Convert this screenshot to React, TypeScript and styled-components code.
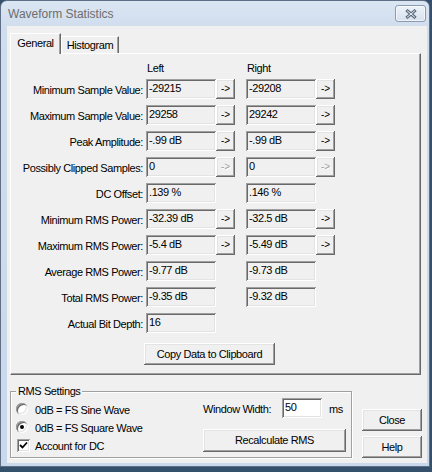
import React from 'react';
import styled, { createGlobalStyle } from 'styled-components';

const UI_FONT = `"Liberation Sans", Arial, sans-serif`;

const GlobalStyle = createGlobalStyle`
  html, body {
    margin: 0;
    padding: 0;
    background: #34506b;
  }
  body {
    font-family: ${UI_FONT};
    font-size: 11px;
    letter-spacing: -0.4px;
    color: #000;
  }
  * {
    box-sizing: border-box;
  }
`;

type Arrow = 'on' | 'off' | undefined;

interface StatRow {
  label: string;
  left: string;
  right?: string;
  arrow?: Arrow;
}

const rows: StatRow[] = [
  { label: 'Minimum Sample Value:', left: '-29215', right: '-29208', arrow: 'on' },
  { label: 'Maximum Sample Value:', left: '29258', right: '29242', arrow: 'on' },
  { label: 'Peak Amplitude:', left: '-.99 dB', right: '-.99 dB', arrow: 'on' },
  { label: 'Possibly Clipped Samples:', left: '0', right: '0', arrow: 'off' },
  { label: 'DC Offset:', left: '.139 %', right: '.146 %' },
  { label: 'Minimum RMS Power:', left: '-32.39 dB', right: '-32.5 dB', arrow: 'on' },
  { label: 'Maximum RMS Power:', left: '-5.4 dB', right: '-5.49 dB', arrow: 'on' },
  { label: 'Average RMS Power:', left: '-9.77 dB', right: '-9.73 dB' },
  { label: 'Total RMS Power:', left: '-9.35 dB', right: '-9.32 dB' },
  { label: 'Actual Bit Depth:', left: '16' },
];

const App = () => {
  return (
    <>
      <GlobalStyle />
      <Window>
        <TitleBar>
          <Title>Waveform Statistics</Title>
          <CloseBox>
            <svg width="12" height="10" viewBox="0 0 12 10">
              <path d="M2.5 2 L9.5 8 M9.5 2 L2.5 8" stroke="#5b6a7e" strokeWidth="3" strokeLinecap="square" />
              <path d="M2.5 2 L9.5 8 M9.5 2 L2.5 8" stroke="#f2f5f9" strokeWidth="1" strokeLinecap="square" />
            </svg>
          </CloseBox>
        </TitleBar>

        <Client>
          <TabStrip>
            <Tab $active $width={51}>General</Tab>
            <Tab $width={58}>Histogram</Tab>
          </TabStrip>

          <TabPage>
            <StatsGrid>
              <ColumnHead $col={2}>Left</ColumnHead>
              <ColumnHead $col={5}>Right</ColumnHead>

              {rows.map((row) => (
                <React.Fragment key={row.label}>
                  <RowLabel>{row.label}</RowLabel>
                  <Field $col={2}>{row.left}</Field>
                  {row.arrow && <ArrowButton $col={3} $disabled={row.arrow === 'off'}>-&gt;</ArrowButton>}
                  {row.right !== undefined && <Field $col={5}>{row.right}</Field>}
                  {row.right !== undefined && row.arrow && (
                    <ArrowButton $col={6} $disabled={row.arrow === 'off'}>-&gt;</ArrowButton>
                  )}
                </React.Fragment>
              ))}

              <CopyButton>Copy Data to Clipboard</CopyButton>
            </StatsGrid>
          </TabPage>

          <BottomRow>
            <GroupBox>
              <Caption>RMS Settings</Caption>
              <GroupInner>
                <OptionList>
                  <Option>
                    <Radio />
                    <OptionText>0dB = FS Sine Wave</OptionText>
                  </Option>
                  <Option>
                    <Radio $checked />
                    <OptionText>0dB = FS Square Wave</OptionText>
                  </Option>
                  <Option>
                    <CheckBox>
                      <svg width="9" height="9" viewBox="0 0 9 9">
                        <polyline points="1,4 3.5,6.5 8,1.5" fill="none" stroke="#000" strokeWidth="1.8" />
                      </svg>
                    </CheckBox>
                    <CheckText>Account for DC</CheckText>
                  </Option>
                </OptionList>

                <WindowControls>
                  <WidthRow>
                    <WidthLabel>Window Width:</WidthLabel>
                    <WidthInput>50</WidthInput>
                    <Unit>ms</Unit>
                  </WidthRow>
                  <RecalcButton>Recalculate RMS</RecalcButton>
                </WindowControls>
              </GroupInner>
            </GroupBox>

            <DialogButtons>
              <PushButton>Close</PushButton>
              <PushButton>Help</PushButton>
            </DialogButtons>
          </BottomRow>
        </Client>
      </Window>
    </>
  );
};

const raised = `
  background: #f0f0f0;
  box-shadow:
    inset -1px -1px 0 #696969,
    inset 1px 1px 0 #ffffff,
    inset -2px -2px 0 #a0a0a0,
    inset 2px 2px 0 #e3e3e3;
`;

const sunken = `
  box-shadow:
    inset 1px 1px 0 #a0a0a0,
    inset -1px -1px 0 #ffffff,
    inset 2px 2px 0 #696969,
    inset -2px -2px 0 #e3e3e3;
`;

const Window = styled.div`
  width: 430px;
  height: 467px;
  display: flex;
  flex-direction: column;
  border: 1px solid #5f7086;
  border-radius: 7px 7px 0 0;
  background: linear-gradient(to bottom, #dbe6f3 0px, #d0ddee 26px, #c9d8ea 100%);
`;

const TitleBar = styled.div`
  height: 25px;
  display: flex;
  align-items: center;
  justify-content: space-between;
  padding: 0 3px 0 7px;
`;

const Title = styled.div`
  font-family: "Liberation Sans", Arial, sans-serif;
  font-size: 12px;
  letter-spacing: 0;
  color: #6d6d6d;
`;

const CloseBox = styled.div`
  width: 31px;
  height: 17px;
  display: flex;
  align-items: center;
  justify-content: center;
  border: 1px solid #8b9bb0;
  border-radius: 3px;
  background: linear-gradient(to bottom, #eef3f9, #d6e1ee);
  box-shadow: inset 0 0 0 1px rgba(255, 255, 255, 0.6);
`;

const Client = styled.div`
  flex: 1;
  display: flex;
  flex-direction: column;
  margin: 0 2px 3px 6px;
  padding: 7px 6px 5px 3px;
  background: #f0f0f0;
`;

const TabStrip = styled.div`
  display: flex;
  align-items: flex-end;
  height: 20px;
  position: relative;
  z-index: 1;
`;

const Tab = styled.div<{ $active?: boolean; $width: number }>`
  width: ${(p) => p.$width}px;
  height: ${(p) => (p.$active ? 21 : 17)}px;
  margin-bottom: ${(p) => (p.$active ? -1 : 0)}px;
  display: flex;
  justify-content: center;
  padding-top: ${(p) => (p.$active ? 3 : 2)}px;
  background: #f0f0f0;
  border-top: 1px solid #ffffff;
  border-left: 1px solid #ffffff;
  border-right: 1px solid #696969;
  box-shadow: inset -1px 0 0 #a0a0a0;
  line-height: 13px;
`;

const TabPage = styled.div`
  height: 322px;
  padding-top: 8px;
  border-top: 1px solid #ffffff;
  border-left: 1px solid #ffffff;
  border-right: 1px solid #696969;
  border-bottom: 1px solid #696969;
  box-shadow: inset -1px -1px 0 #a0a0a0;
`;

const StatsGrid = styled.div`
  display: grid;
  grid-template-columns: 135px 70px 19px 11px 70px 19px;
  grid-template-rows: 11px;
  grid-auto-rows: 20px;
  row-gap: 6px;
`;

const ColumnHead = styled.div<{ $col: number }>`
  grid-column: ${(p) => p.$col} / span 2;
  padding-left: 1px;
  line-height: 14px;
  margin-top: -1px;
`;

const RowLabel = styled.div`
  grid-column: 1;
  text-align: right;
  padding-right: 3px;
  line-height: 22px;
  white-space: nowrap;
`;

const Field = styled.div<{ $col: number }>`
  grid-column: ${(p) => p.$col};
  height: 20px;
  padding: 0 3px;
  line-height: 18px;
  white-space: nowrap;
  background: #f0f0f0;
  ${sunken}
`;

const ArrowButton = styled.div<{ $col: number; $disabled?: boolean }>`
  grid-column: ${(p) => p.$col};
  height: 20px;
  display: flex;
  align-items: center;
  justify-content: center;
  padding-bottom: 1px;
  font-size: 10px;
  letter-spacing: 0;
  color: ${(p) => (p.$disabled ? '#a0a0a0' : '#000')};
  text-shadow: ${(p) => (p.$disabled ? '1px 1px 0 #fff' : 'none')};
  ${raised}
`;

const PushButton = styled.div`
  width: 60px;
  height: 22px;
  display: flex;
  align-items: center;
  justify-content: center;
  padding-bottom: 1px;
  white-space: nowrap;
  ${raised}
`;

const CopyButton = styled(PushButton)`
  grid-column: 2 / span 5;
  justify-self: start;
  width: 131px;
  margin: 4px 0 0 -2px;
`;

const BottomRow = styled.div`
  display: flex;
  gap: 10px;
  margin-top: 16px;
`;

const GroupBox = styled.div`
  position: relative;
  width: 342px;
  height: 67px;
  border: 1px solid #a0a0a0;
  box-shadow: inset 1px 1px 0 #ffffff, 1px 1px 0 #ffffff;
`;

const Caption = styled.div`
  position: absolute;
  top: -8px;
  left: 5px;
  padding: 0 2px;
  line-height: 14px;
  background: #f0f0f0;
`;

const GroupInner = styled.div`
  display: flex;
  justify-content: space-between;
  height: 100%;
`;

const OptionList = styled.div`
  display: flex;
  flex-direction: column;
  padding: 8px 0 0 5px;
`;

const Option = styled.div`
  height: 18px;
  display: flex;
  align-items: center;
  white-space: nowrap;
`;

const Radio = styled.span<{ $checked?: boolean }>`
  position: relative;
  flex: none;
  width: 12px;
  height: 12px;
  border-radius: 50%;
  background: #ffffff;
  box-shadow:
    inset 1px 1px 0 #a0a0a0,
    inset -1px -1px 0 #ffffff,
    inset 2px 2px 0 #696969,
    inset -2px -2px 0 #e3e3e3;

  &::after {
    content: '';
    display: ${(p) => (p.$checked ? 'block' : 'none')};
    position: absolute;
    left: 4px;
    top: 4px;
    width: 4px;
    height: 4px;
    border-radius: 50%;
    background: #000;
  }
`;

const OptionText = styled.span`
  margin-left: 7px;
  padding-top: 1px;
`;

const CheckBox = styled.span`
  flex: none;
  width: 13px;
  height: 13px;
  margin-left: 1px;
  display: flex;
  align-items: center;
  justify-content: center;
  background: #ffffff;
  ${sunken}
`;

const CheckText = styled.span`
  margin-left: 5px;
  padding-top: 1px;
`;

const WindowControls = styled.div`
  width: 143px;
  margin-right: 5px;
  padding-top: 6px;
  display: flex;
  flex-direction: column;
  gap: 11px;
`;

const WidthRow = styled.div`
  height: 20px;
  display: flex;
  align-items: center;
  white-space: nowrap;
`;

const WidthLabel = styled.span`
  width: 79px;
  padding-top: 2px;
`;

const WidthInput = styled.div`
  width: 40px;
  height: 20px;
  padding: 0 3px;
  line-height: 18px;
  background: #ffffff;
  ${sunken}
`;

const Unit = styled.span`
  margin-left: 7px;
  padding-top: 2px;
`;

const RecalcButton = styled(PushButton)`
  width: 143px;
  height: 23px;
`;

const DialogButtons = styled.div`
  display: flex;
  flex-direction: column;
  justify-content: flex-end;
  gap: 5px;
  margin-right: -1px;
`;

export default App;
